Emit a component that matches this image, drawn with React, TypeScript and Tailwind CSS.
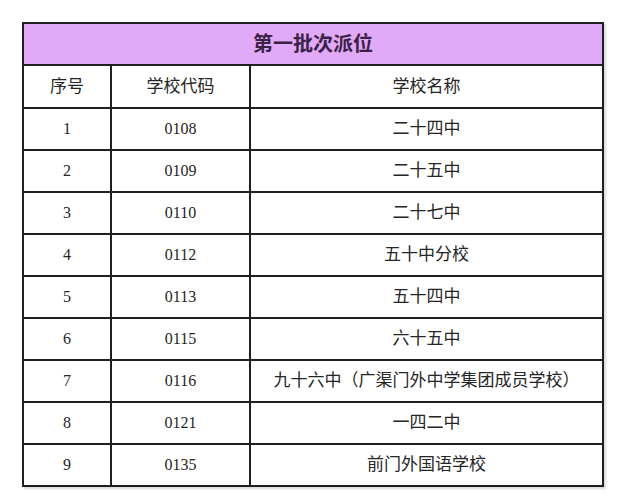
const rows = [
  { no: "1", code: "0108", name: "二十四中" },
  { no: "2", code: "0109", name: "二十五中" },
  { no: "3", code: "0110", name: "二十七中" },
  { no: "4", code: "0112", name: "五十中分校" },
  { no: "5", code: "0113", name: "五十四中" },
  { no: "6", code: "0115", name: "六十五中" },
  { no: "7", code: "0116", name: "九十六中（广渠门外中学集团成员学校）" },
  { no: "8", code: "0121", name: "一四二中" },
  { no: "9", code: "0135", name: "前门外国语学校" },
];

const cell = "border-2 border-[#1f1f1f] text-center align-middle p-0";

const App = () => {
  return (
    <div className="w-[624px] h-[500px] bg-white pt-[22px] pl-[22px] font-['Liberation_Serif','Noto_Sans_CJK_SC',serif] text-[#262626]">
      <table className="w-[580px] border-collapse table-fixed shadow-[2px_2px_2px_rgba(0,0,0,0.15)]">
        <colgroup>
          <col className="w-[88px]" />
          <col className="w-[139px]" />
          <col className="w-[353px]" />
        </colgroup>
        <tbody>
          <tr className="h-[42px] bg-[#e1aaf8]">
            <td colSpan={3} className={`${cell} text-[20px] font-bold text-[#3b2146]`}>
              第一批次派位
            </td>
          </tr>
          <tr className="h-[43px]">
            <td className={`${cell} text-[17px]`}>序号</td>
            <td className={`${cell} text-[17px]`}>学校代码</td>
            <td className={`${cell} text-[17px]`}>学校名称</td>
          </tr>
          {rows.map((r) => (
            <tr key={r.no} className="h-[42px]">
              <td className={`${cell} text-[16px]`}>{r.no}</td>
              <td className={`${cell} text-[16px]`}>{r.code}</td>
              <td className={`${cell} text-[17px]`}>{r.name}</td>
            </tr>
          ))}
        </tbody>
      </table>
    </div>
  );
};

export default App;
